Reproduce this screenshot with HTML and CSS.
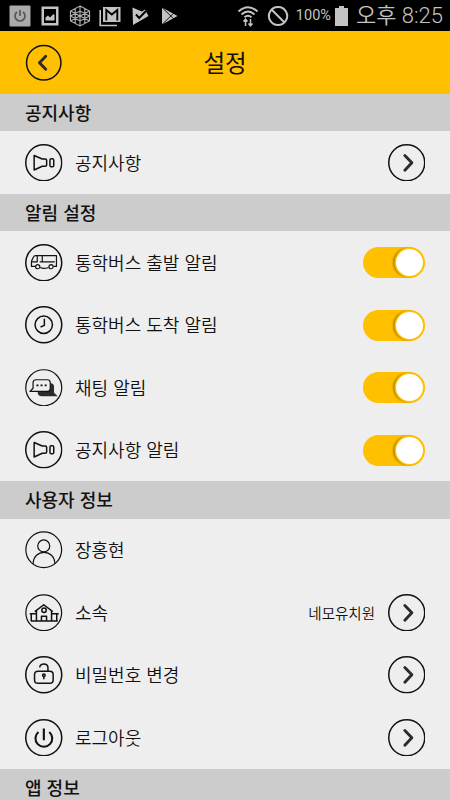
FILE: index.html
```html
<!DOCTYPE html>
<html lang="ko">
<head>
    <meta charset="UTF-8">
    <meta name="viewport" content="width=device-width, initial-scale=1.0">
    <title>설정</title>
    <link rel="stylesheet" href="styles.css">
</head>
<body>
    <!-- Shared icon shapes, drawn around the centre point -->
    <svg class="defs" width="0" height="0">
        <symbol id="next" viewBox="-18.75 -18.75 37.5 37.5">
            <circle r="18"/>
            <path d="M-1.9-7.2 5.1 0-1.9 7.5" class="chevron"/>
        </symbol>
        <symbol id="horn" viewBox="-18.75 -18.75 37.5 37.5">
            <circle r="18"/>
            <path d="M-9.6-7.2-1.5-3.7H1.5Q2.9-3.7 2.9-2.5V2.3Q2.9 3.5 1.5 3.5H-1.5L-9.6 7.2Z"/>
            <rect x="6.2" y="-3.9" width="3.8" height="8" rx="1.3"/>
        </symbol>
    </svg>

    <div class="status-bar">
        <div class="status-left">
            <svg viewBox="0 0 22 22"><rect x=".5" y=".5" width="21" height="21" rx="1" fill="#aaa"/><path d="M8 7a5 5 0 1 0 6 0M11 5v6" fill="none" stroke="#555" stroke-width="1.7"/></svg>
            <svg viewBox="0 0 22 22"><path d="M2.5 1.5h17v19h-17zM5 4v14h12V4z" fill-rule="evenodd"/><path d="M6.500 15.500v-3l2.500-2 2 2 3.500-3.500 1 1v5.500z"/></svg>
            <svg viewBox="0 0 22 22"><path d="M11 1l9.500 5v10L11 21l-9.500-5V6zM11 1v20M1.500 6l19 10M20.500 6l-19 10M6.200 3.500v15M15.800 3.500v15M1.500 11l9.500-5 9.500 5-9.500 5z" fill="none" stroke="#b4b4b4" stroke-width="1.1"/></svg>
            <svg viewBox="0 0 22 22"><path d="M1.200 5v15.500H18" fill="none" stroke="#c4c4c4" stroke-width="1.600"/><path d="M4 2h17.500v15H4z"/><path d="M7.300 15.500V5l5.500 4.500L18.300 5v10.500" fill="none" stroke="#000" stroke-width="1.900"/></svg>
            <svg viewBox="0 0 22 22"><path d="M3.500 2.500Q9 5 13 6.500L16 4.500 19.500 11 4 20z"/><path d="M7 9.500l3.200 3.500L17 6" fill="none" stroke="#000" stroke-width="1.900"/></svg>
            <svg viewBox="0 0 22 22"><path d="M3 2.500l15.500 8.500L3 19.500z"/><path d="M3 2.500l13 12.500M3 19.500L16 7" fill="none" stroke="#000" stroke-width=".9"/></svg>
        </div>
        <div class="status-right">
            <svg class="wifi" viewBox="0 0 22 22"><path d="M1.500 6.500Q11-2 20.500 6.500M4.500 9.500q6.500-6 13 0M7.500 12.200q3.500-3 7 0" fill="none" stroke="#c4c4c4" stroke-width="1.900"/><path d="M8.500 21v-6.500M6.500 16.500l2-2.300 2 2.300M13.500 14v6.500M11.500 18.500l2 2.300 2-2.300" fill="none" stroke="#c4c4c4" stroke-width="1.500"/></svg>
            <svg class="block" viewBox="0 0 22 22"><path d="M11 1.900a9.100 9.100 0 1 0 .1 0zM4.500 4.500l13 13" fill="none" stroke="#c4c4c4" stroke-width="2"/></svg>
            <span class="percent">100%</span>
            <svg class="battery" viewBox="0 0 13 20"><path d="M4 0h5v2h4v18H0V2h4z"/></svg>
            <span class="time">오후 8:25</span>
        </div>
    </div>

    <header class="header">
        <svg class="icon back" viewBox="-18.75 -18.75 37.5 37.5"><circle r="17.200"/><path d="M2-6.500-4.300 0 2 6.500" class="chevron"/></svg>
        <h1>설정</h1>
    </header>

    <h2>공지사항</h2>
    <div class="row">
        <svg class="icon"><use href="#horn"/></svg>
        <span class="label">공지사항</span>
        <svg class="icon"><use href="#next"/></svg>
    </div>

    <h2>알림 설정</h2>
    <div class="row">
        <svg class="icon" viewBox="-18.75 -18.75 37.5 37.5">
            <circle r="18"/>
            <g class="mid">
                <path d="M-8.500 3.700H-12.300V-1.500L-10.300-5.800Q-9.700-7.200-8.200-7.200H12.700V3.700H10M-3.500 4.700Q0 6.500 4.800 4.700M-12-.9H-6.500V-6.500M-4-.9H11M-1.500-6.500V-.9"/>
                <circle cx="-6" cy="3.900" r="2.100"/>
                <circle cx="7.300" cy="3.900" r="2.100"/>
            </g>
        </svg>
        <span class="label">통학버스 출발 알림</span>
        <span class="toggle"></span>
    </div>
    <div class="row">
        <svg class="icon" viewBox="-18.75 -18.75 37.5 37.5"><circle r="18"/><circle r="8.700"/><path d="M.6-6V.6L-3.200 2.300"/></svg>
        <span class="label">통학버스 도착 알림</span>
        <span class="toggle"></span>
    </div>
    <div class="row">
        <svg class="icon" viewBox="-18.75 -18.75 37.5 37.5">
            <circle r="18" class="mid"/>
            <path d="M7-4.500Q10.300-4.500 10.300-1V5L14 8.500H-2Q-5.500 8.500-6 5.500V3.500Z" class="solid"/>
            <path d="M-13.800 3.700-10.700.5V-5Q-10.700-8-7.700-8H3.500Q6.500-8 6.500-5V.7Q6.500 3.700 3.500 3.700Z" class="bubble"/>
            <path d="M-6.300-3.200v1.800M-2.200-3.200v1.800M1.900-3.200v1.800" stroke-width="2"/>
        </svg>
        <span class="label">채팅 알림</span>
        <span class="toggle"></span>
    </div>
    <div class="row">
        <svg class="icon"><use href="#horn"/></svg>
        <span class="label">공지사항 알림</span>
        <span class="toggle"></span>
    </div>

    <h2>사용자 정보</h2>
    <div class="row">
        <svg class="icon" viewBox="-18.75 -18.75 37.5 37.5"><g class="mid"><circle r="17.900"/><circle cy="-3.800" r="6"/><path d="M-10.600 14.200C-10.500-1.300 11-1.300 11.100 14.200"/></g></svg>
        <span class="label">장홍현</span>
    </div>
    <div class="row">
        <svg class="icon" viewBox="-18.75 -18.75 37.5 37.5">
            <circle r="17.900" class="mid"/>
            <path d="M-9-1.200 0-8 9-1.200M-14 1H-7.500M7.500 1H15M-13 8.300H14M-12.500 1V8.300M-7.300-2V8.300M7.800-2V8.300M13 1V8.300M-2.300 8.300V3.500H2.800V8.300"/>
            <circle cx=".3" cy="-2.500" r="2.200"/>
        </svg>
        <span class="label">소속</span>
        <span class="value">네모유치원</span>
        <svg class="icon"><use href="#next"/></svg>
    </div>
    <div class="row">
        <svg class="icon" viewBox="-18.75 -18.75 37.5 37.5">
            <circle r="18"/>
            <rect x="-9.200" y="-3.600" width="18.600" height="12.200" rx="3.300"/>
            <path d="M-4-7.300C-4-11.800 4.200-11.800 4.200-7V-3.600M.1 1V4.600"/>
            <circle cx=".1" cy=".5" r="1.300"/>
        </svg>
        <span class="label">비밀번호 변경</span>
        <svg class="icon"><use href="#next"/></svg>
    </div>
    <div class="row">
        <svg class="icon" viewBox="-18.75 -18.75 37.5 37.5"><circle r="18"/><path d="M-5.300-5.800A8.400 8.400 0 1 0 5.500-5.800M.1-9.200V2.500" stroke-width="2.100"/></svg>
        <span class="label">로그아웃</span>
        <svg class="icon"><use href="#next"/></svg>
    </div>

    <h2>앱 정보</h2>
</body>
</html>
```

FILE: styles.css
```css
* {
    margin: 0;
    padding: 0;
    box-sizing: border-box;
}

body {
    font-family: 'Noto Sans CJK KR', sans-serif;
    height: 100vh;
    overflow: hidden;
    background: #eeeeee;
    color: #111111;
}

.defs {
    display: block;
}

/* Status bar */
.status-bar {
    display: flex;
    justify-content: space-between;
    align-items: center;
    height: 31.25px;
    padding: 0 7px 0 8.5px;
    background: #000000;
    color: #c4c4c4;
    font-family: Roboto, 'Noto Sans CJK KR', sans-serif;
}

.status-bar svg {
    width: 22px;
    height: 22px;
    fill: #c4c4c4;
}

.status-left,
.status-right {
    display: flex;
    align-items: center;
    gap: 8px;
}

.percent {
    margin: 0 1px 0 -1px;
    font-size: 14.5px;
}

.status-bar .battery {
    width: 13px;
    height: 20px;
    margin-left: -5px;
}

.time {
    font-size: 22px;
    font-weight: 350;
    line-height: 31px;
    white-space: nowrap;
}

/* Title bar */
.header {
    display: grid;
    grid-template-columns: 37.5px 1fr 37.5px;
    align-items: center;
    height: 62.5px;
    padding: 0 25px;
    background: #ffc000;
}

h1 {
    padding-bottom: 2px;
    font-size: 23.5px;
    font-weight: 400;
    line-height: 30px;
    text-align: center;
}

h2 {
    height: 37.5px;
    padding-left: 25px;
    background: #cccccc;
    font-size: 18px;
    font-weight: 500;
    line-height: 37.5px;
}

/* Setting rows */
.row {
    display: flex;
    align-items: center;
    height: 62.5px;
    padding: 0 25px;
}

.label {
    flex: 1;
    margin-left: 12.5px;
    padding-bottom: 2px;
    font-size: 18px;
    font-weight: 350;
}

.value {
    margin-right: 12.5px;
    padding-bottom: 1px;
    font-size: 14.5px;
    font-weight: 350;
}

.icon {
    width: 37.5px;
    height: 37.5px;
    flex: none;
    fill: none;
    stroke: #111111;
    stroke-width: 1.5;
    stroke-linejoin: round;
}

.chevron {
    stroke: #2b2b2b;
    stroke-width: 2.9;
    stroke-linecap: round;
}

.mid {
    stroke-width: 1.2;
}

.solid {
    fill: #2b2b2b;
    stroke: none;
}

.bubble {
    fill: #eeeeee;
    stroke-width: 1.2;
}

.toggle {
    width: 62px;
    height: 31px;
    padding: 2px;
    border-radius: 16px;
    background: #ffc000;
}

.toggle::after {
    content: "";
    display: block;
    width: 27px;
    height: 27px;
    margin-left: auto;
    border-radius: 50%;
    background: #ffffff;
    box-shadow: 0 0 0 1.5px #ffc000, -2px 0 2px 1px rgba(120, 85, 0, 0.6);
}
```
